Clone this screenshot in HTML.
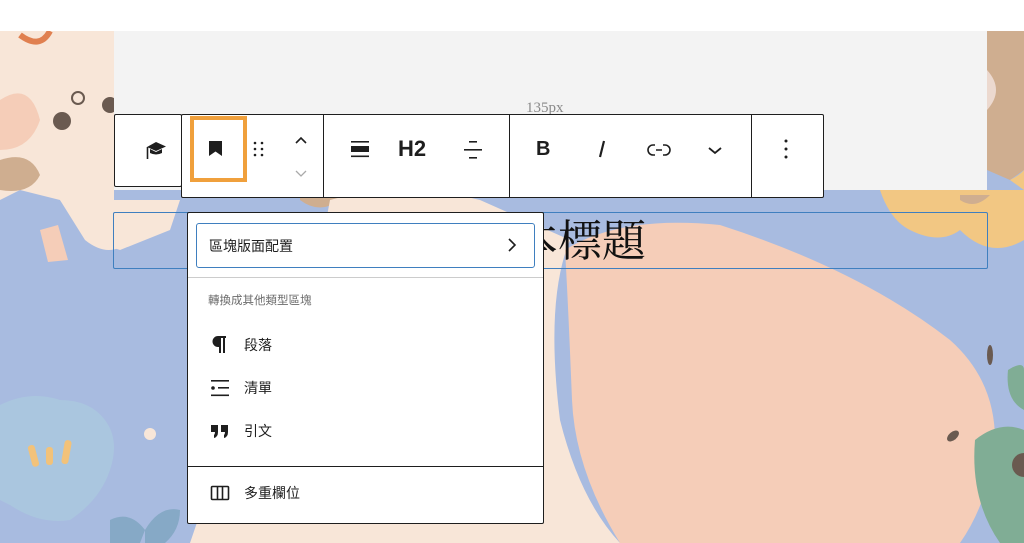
<!DOCTYPE html>
<html><head><meta charset="utf-8"><style>
*{margin:0;padding:0;box-sizing:border-box}
body{width:1024px;height:543px;overflow:hidden;position:relative;background:#fff;font-family:"Liberation Sans","Noto Sans CJK TC",sans-serif}
.abs{position:absolute}
.menu .it{position:absolute;left:22px;font-size:14px;color:#1e1e1e;display:flex;align-items:center}
.menu .it span{margin-left:14px}
</style></head><body>
<svg class="abs" style="left:0;top:31px" width="1024" height="512" viewBox="0 31 1024 512">
<rect x="0" y="31" width="1024" height="512" fill="#a8bbe0"/>
<path d="M0 31 H114 V200 L180 200 L170 230 L120 250 L90 240 L60 200 L20 190 L0 200Z" fill="#f8e6d8"/>
<path d="M60 200 Q80 160 110 200 L130 240 Q110 260 85 240Z" fill="#f8e6d8"/>
<path d="M40 230 L58 225 L68 260 L48 262Z" fill="#f5cdb8"/>
<path d="M0 100 Q30 80 40 120 Q30 150 0 150Z" fill="#f5cdb8"/>
<path d="M0 160 Q30 150 40 175 Q30 195 0 190Z" fill="#cfae90"/>
<circle cx="62" cy="121" r="9" fill="#6a5a50"/>
<circle cx="110" cy="105" r="8" fill="#6a5a50"/>
<circle cx="78" cy="98" r="6" fill="none" stroke="#6a5a50" stroke-width="2"/>
<path d="M20 35 Q40 50 50 31" stroke="#e08050" stroke-width="6" fill="none"/>
<path d="M300 190 Q330 170 340 200 Q320 215 300 200Z" fill="#cfae90"/>
<path d="M190 543 Q230 420 300 360 L330 200 Q400 180 480 200 L570 240 Q545 300 560 420 Q580 500 620 543Z" fill="#f8e6d8"/>
<path d="M565 250 Q620 215 720 225 Q860 270 950 340 Q995 380 995 440 Q990 500 960 543 L620 543 Q575 470 572 400 Q568 300 565 250Z" fill="#f5cdb8"/>
<path d="M880 190 H1024 V240 Q990 260 960 230 Q940 245 910 230 Q890 220 880 190Z" fill="#f2c783"/>
<path d="M987 31 H1024 V170 L1010 180 L987 170Z" fill="#cfae90"/>
<path d="M987 70 Q1005 90 987 110Z" fill="#ecd9cf"/>
<path d="M1010 180 Q1020 175 1024 170 V190Z" fill="#f2c783"/>
<path d="M960 200 Q975 210 990 195 H960Z" fill="#cfae90"/>
<path d="M1008 370 Q1024 360 1024 370 V410 Q1005 400 1008 370Z" fill="#80ad95"/>
<path d="M975 440 Q1000 420 1024 430 V543 H1000 Q970 500 975 440Z" fill="#80ad95"/>
<circle cx="1024" cy="465" r="12" fill="#6a5a50"/>
<ellipse cx="990" cy="355" rx="3" ry="10" fill="#6a5a50"/>
<ellipse cx="953" cy="436" rx="7" ry="4" fill="#6a5a50" transform="rotate(-40 953 436)"/>
<path d="M0 405 Q30 390 60 400 Q90 400 105 420 Q120 440 110 470 Q100 500 70 520 Q40 525 10 505 L0 500Z" fill="#aac6df"/>
<rect x="30" y="445" width="7" height="22" rx="3" fill="#f2c27a" transform="rotate(-15 33 456)"/>
<rect x="46" y="447" width="7" height="18" rx="3" fill="#f2c27a"/>
<rect x="63" y="440" width="7" height="24" rx="3" fill="#f2c27a" transform="rotate(10 66 452)"/>
<circle cx="150" cy="434" r="6" fill="#f8e6d8"/>
<path d="M110 520 Q130 510 145 530 L140 543 H110Z M145 530 Q160 505 180 510 Q180 530 165 543 H145Z" fill="#86a9c6"/>
</svg>
<div class="abs" style="left:114px;top:31px;width:873px;height:159px;background:#f3f3f3"></div>
<div class="abs" style="left:526px;top:100px;font-family:'Liberation Serif',serif;font-size:15px;color:#8a8a8a">135px</div>
<div class="abs" style="left:113px;top:212px;width:875px;height:57px;border:1.5px solid #3f7fbf;border-radius:2px"></div>
<div class="abs" style="left:514px;top:214px;font-family:'Liberation Serif','Noto Serif CJK SC',serif;font-size:44px;line-height:56px;color:#111">本標題</div>
<!-- toolbar -->
<div class="abs" style="left:181px;top:114px;width:643px;height:84px;background:#fff;border:1px solid #1e1e1e;border-radius:2px"></div>
<div class="abs" style="left:114px;top:114px;width:68px;height:73px;background:#fff;border:1px solid #1e1e1e;border-radius:2px"></div>
<div class="abs" style="left:323px;top:114px;width:1px;height:84px;background:#1e1e1e"></div>
<div class="abs" style="left:509px;top:114px;width:1px;height:84px;background:#1e1e1e"></div>
<div class="abs" style="left:751px;top:114px;width:1px;height:84px;background:#1e1e1e"></div>
<svg class="abs" style="left:144px;top:138px" width="24" height="24" viewBox="0 0 24 24"><path d="M12 4 L22 8.5 L12 13 L3 9 Z" fill="#1e1e1e"/><path d="M6 11 V15 Q12 18 18 15 V11 L12 14Z" fill="#1e1e1e"/><path d="M3.5 9 V21" stroke="#1e1e1e" stroke-width="1.6"/></svg>
<div class="abs" style="left:190px;top:116px;width:57px;height:66px;border:4px solid #f0a03c"></div>
<svg class="abs" style="left:207px;top:139px" width="18" height="20" viewBox="0 0 18 20"><path d="M2 2 H15 V17 L8.5 12.5 L2 17Z" fill="#1e1e1e"/></svg>
<svg class="abs" style="left:252px;top:141px" width="14" height="18"><g fill="#1e1e1e"><circle cx="3" cy="2" r="1.3"/><circle cx="10" cy="2" r="1.3"/><circle cx="3" cy="8" r="1.3"/><circle cx="10" cy="8" r="1.3"/><circle cx="3" cy="14" r="1.3"/><circle cx="10" cy="14" r="1.3"/></g></svg>
<svg class="abs" style="left:293px;top:133px" width="16" height="48"><path d="M3 10 L8 5 L13 10" stroke="#1e1e1e" stroke-width="1.6" fill="none"/><path d="M3 38 L8 43 L13 38" stroke="#aaa" stroke-width="1.3" fill="none"/></svg>
<svg class="abs" style="left:349px;top:139px" width="22" height="20"><rect x="2" y="2" width="18" height="1.6" fill="#1e1e1e"/><rect x="2" y="7" width="18" height="6" fill="#1e1e1e"/><rect x="2" y="16.5" width="18" height="1.6" fill="#1e1e1e"/></svg>
<div class="abs" style="left:398px;top:136px;font-size:22px;font-weight:bold;color:#1e1e1e">H2</div>
<svg class="abs" style="left:462px;top:139px" width="22" height="22"><rect x="7" y="2" width="8" height="1.6" fill="#1e1e1e"/><rect x="2" y="10" width="18" height="1.6" fill="#1e1e1e"/><rect x="7" y="18" width="8" height="1.6" fill="#1e1e1e"/></svg>
<div class="abs" style="left:536px;top:138px;font-size:20px;font-weight:bold;color:#1e1e1e">B</div>
<svg class="abs" style="left:595px;top:138px" width="14" height="22"><path d="M9 3 L5 19" stroke="#1e1e1e" stroke-width="2.2"/></svg>
<svg class="abs" style="left:647px;top:141px" width="24" height="18"><path d="M8 4 H6 A5 5 0 0 0 6 14 H8 M16 4 H18 A5 5 0 0 1 18 14 H16 M9 9 H15" stroke="#1e1e1e" stroke-width="1.6" fill="none"/></svg>
<svg class="abs" style="left:706px;top:142px" width="18" height="16"><path d="M3 6 L9 11 L15 6" stroke="#1e1e1e" stroke-width="1.8" fill="none"/></svg>
<svg class="abs" style="left:780px;top:138px" width="12" height="22"><g fill="#1e1e1e"><circle cx="6" cy="3" r="1.5"/><circle cx="6" cy="11" r="1.5"/><circle cx="6" cy="19" r="1.5"/></g></svg>
<!-- menu -->
<div class="abs menu" style="left:187px;top:212px;width:357px;height:312px;background:#fff;border:1px solid #1e1e1e;border-radius:2px">
 <div class="abs" style="left:8px;top:10px;width:339px;height:45px;border:1.5px solid #3f7fbf;border-radius:3px"></div>
 <div class="abs" style="left:21px;top:23px;font-size:14px;color:#1e1e1e">區塊版面配置</div>
 <svg class="abs" style="left:318px;top:24px" width="12" height="16"><path d="M3 2 L9 8 L3 14" stroke="#1e1e1e" stroke-width="1.6" fill="none"/></svg>
 <div class="abs" style="left:0;top:64px;width:355px;height:1px;background:#ccc"></div>
 <div class="abs" style="left:20px;top:79px;font-size:11.5px;color:#6b6b6b">轉換成其他類型區塊</div>
 <div class="it" style="top:122px"><svg width="20" height="20"><path d="M12 2 H8 A4.5 4.5 0 0 0 8 11 H10 V18 M10 2 V18 M14 2 V18 M8 2 H16" stroke="#1e1e1e" stroke-width="2" fill="none"/><path d="M8 2 A4.5 4.5 0 0 0 8 11 H10 V2Z" fill="#1e1e1e"/></svg><span>段落</span></div>
 <div class="it" style="top:165px"><svg width="20" height="20"><rect x="1" y="2" width="18" height="1.6" fill="#1e1e1e"/><circle cx="3" cy="10" r="1.8" fill="#1e1e1e"/><rect x="8" y="9" width="11" height="1.6" fill="#1e1e1e"/><rect x="1" y="16.5" width="18" height="1.6" fill="#1e1e1e"/></svg><span>清單</span></div>
 <div class="it" style="top:208px"><svg width="20" height="20"><path d="M1 4 H8 V11 Q8 16 4 17 L4 14 Q5 13 5 11 H1Z M11 4 H18 V11 Q18 16 14 17 L14 14 Q15 13 15 11 H11Z" fill="#1e1e1e"/></svg><span>引文</span></div>
 <div class="abs" style="left:0;top:253px;width:355px;height:1px;background:#1e1e1e"></div>
 <div class="it" style="top:270px"><svg width="20" height="20"><rect x="1.5" y="3.5" width="17" height="13" rx="1" stroke="#1e1e1e" stroke-width="1.6" fill="none"/><path d="M7.5 4 V16 M12.5 4 V16" stroke="#1e1e1e" stroke-width="1.6"/></svg><span>多重欄位</span></div>
</div>
</body></html>
